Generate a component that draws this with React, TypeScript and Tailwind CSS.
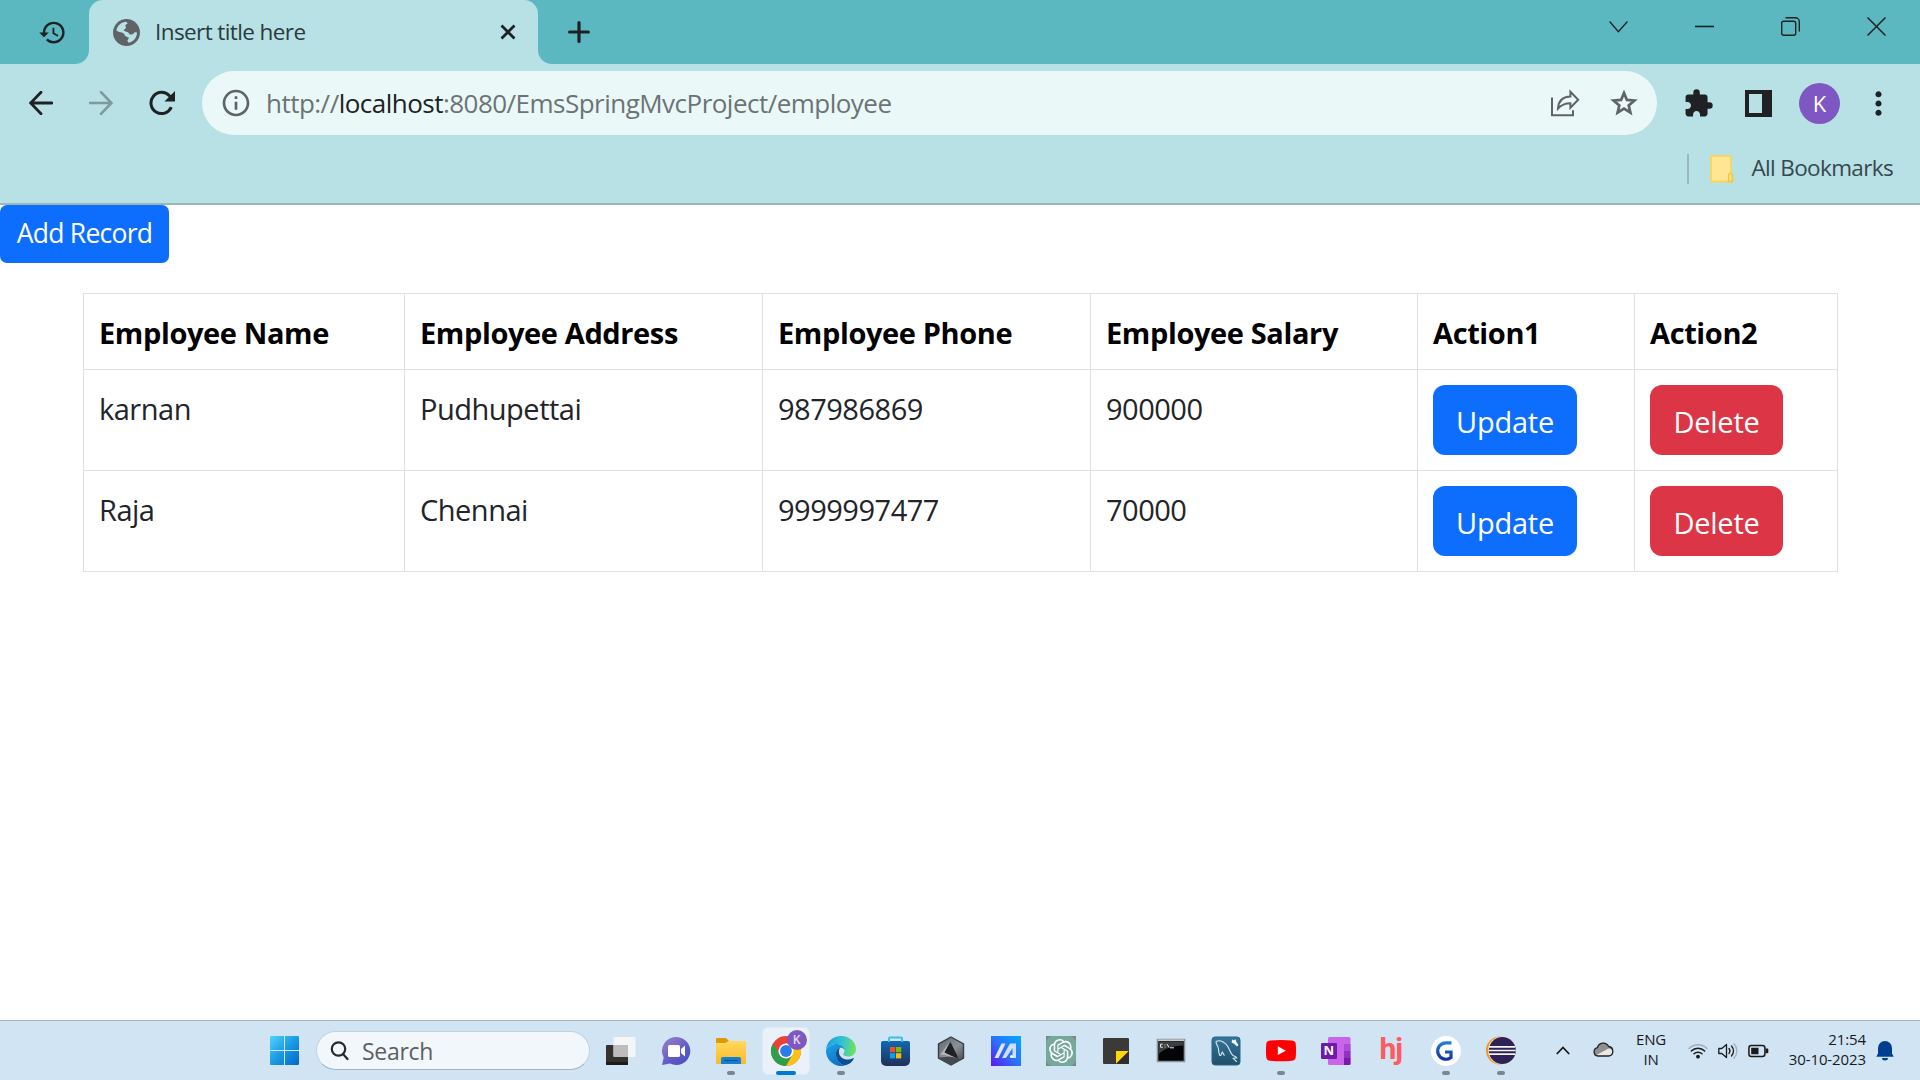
import type { ReactNode } from "react";
import { MdExtension, MdHistory, MdInfoOutline, MdMoreVert } from "react-icons/md";
import { SiOpenai } from "react-icons/si";

const columns = ["Employee Name", "Employee Address", "Employee Phone", "Employee Salary", "Action1", "Action2"];
const employees = [
  { name: "karnan", address: "Pudhupettai", phone: "987986869", salary: "900000" },
  { name: "Raja", address: "Chennai", phone: "9999997477", salary: "70000" },
];

function TabStrip() {
  return (
    <div className="flex h-16 bg-[#5bb8c1] text-[#202124]">
      <div className="w-[89px] shrink-0 bg-[#b7e1e4]">
        <div className="flex h-16 items-center rounded-br-[14px] bg-[#5bb8c1] pl-[38px]">
          <MdHistory size={29} />
        </div>
      </div>
      <div className="flex w-[449px] shrink-0 bg-[#5bb8c1]">
        <div className="flex flex-1 items-center rounded-t-[14px] bg-[#b7e1e4] pr-[21px] pl-[24px]">
          <svg width="27" height="27" viewBox="0 0 27 27">
            <circle cx="13.5" cy="13.5" r="13.5" fill="#5f6368" />
            <path d="M3.400 11.500C4.300 6.500 8.500 3 13 2.800L14.800 4.200 12.300 6.300 13 9 10.500 11.300 12.500 12.600 15 13.200 16.800 15.500 20 15.200 21.500 13.200 24 13.500C24 18.500 20.500 22.800 15.500 23.800L14.300 21.800 16 18.800 12.500 17.300 10.300 14 5.500 12.800z" fill="#b7e1e4" />
            <path d="M3.300 13.200l6 .8 2.300 3.800 2.800 1.800-1.500 4.500C7 24 3 19 3.300 13.200z" fill="#5f6368" />
          </svg>
          <span className="ml-[15px] text-[22.5px] tracking-[-0.6px] whitespace-nowrap text-[#2b3a3d]">Insert title here</span>
          <svg className="ml-auto" width="18" height="18" viewBox="0 0 18 18" stroke="currentColor" strokeWidth="2.8">
            <path d="M2.500 2.500l13 13M15.500 2.500l-13 13" />
          </svg>
        </div>
      </div>
      <div className="flex flex-1 bg-[#b7e1e4]">
        <div className="flex flex-1 items-center rounded-bl-[14px] bg-[#5bb8c1] pl-[30px]">
          <svg width="22" height="22" viewBox="0 0 22 22" stroke="currentColor" strokeWidth="3.2" strokeLinecap="round">
            <path d="M11 1.600v18.800M1.600 11h18.800" />
          </svg>
          <div className="mb-[11px] ml-auto flex items-center gap-[67px] pr-[34px]">
            <svg width="19" height="19" viewBox="0 0 19 19" fill="none" stroke="currentColor" strokeWidth="1.3">
              <path d="M.6 4.500l8.800 10.200 9-10.200" />
            </svg>
            <svg width="19" height="19" viewBox="0 0 19 19" stroke="currentColor" strokeWidth="1.600">
              <path d="M0 9.500h19" />
            </svg>
            <svg width="19" height="19" viewBox="0 0 19 19" fill="none" stroke="currentColor" strokeWidth="1.400">
              <rect x=".7" y="4.300" width="14" height="14" rx="2" />
              <path d="M4.500.8h9.800a4 4 0 0 1 4 4v9.800" />
            </svg>
            <svg width="19" height="19" viewBox="0 0 19 19" stroke="currentColor" strokeWidth="1.500">
              <path d="M.5.5l18 18M18.500.5l-18 18" />
            </svg>
          </div>
        </div>
      </div>
    </div>
  );
}

function Toolbar() {
  return (
    <div className="flex h-[78px] items-center pl-[29px] text-[#202124]">
      <svg width="24" height="24" viewBox="0 0 24 24" fill="none" stroke="currentColor" strokeWidth="2.8" strokeLinecap="round">
        <path d="M12 1.200L1.600 12 12 22.800M1.600 12H23" />
      </svg>
      <svg className="ml-9 text-[#7f999c]" width="24" height="24" viewBox="0 0 24 24" fill="none" stroke="currentColor" strokeWidth="2.600" strokeLinecap="round">
        <path d="M12 1.200L22.400 12 12 22.800M22.400 12H1" />
      </svg>
      <svg className="ml-9" width="27" height="26" viewBox="0 0 27 26" fill="none" stroke="currentColor" strokeWidth="3">
        <path d="M22.300 17.200A10.600 10.600 0 1 1 20.400 5.800l2 2" />
        <path d="M26 1v10.400H15.400z" fill="currentColor" stroke="none" />
      </svg>
      <div className="ml-[26px] flex h-16 w-[1455px] items-center rounded-full bg-[#ebf8f8] pl-[18px] text-[#5f6368]">
        <MdInfoOutline size={32} />
        <span className="ml-[14px] text-[26px] leading-none tracking-[-0.52px] whitespace-nowrap text-[#6b7376]">
          http://<span className="text-[#202124]">localhost</span>:8080/EmsSpringMvcProject/employee
        </span>
        <div className="ml-auto flex items-center gap-[28px] pr-[17px]">
          <svg width="30" height="28" viewBox="0 0 30 28" fill="none" stroke="currentColor" strokeWidth="2">
            <path d="M2 8.500v17.800h21v-5M8 19.500c.4-8 5-11.800 12.400-12V2.800l7.800 8-7.800 8v-4.600c-5.400 0-9 1.400-12.400 5.300z" />
          </svg>
          <svg width="32" height="32" viewBox="0 0 32 32" fill="none" stroke="currentColor" strokeWidth="2.7">
            <path d="M16 6l2.900 6.900 7.500.6-5.700 4.900 1.700 7.200-6.400-3.900-6.400 3.900 1.700-7.200-5.700-4.900 7.500-.6z" />
          </svg>
        </div>
      </div>
      <MdExtension className="ml-[26px]" size={31} />
      <svg className="ml-[31px]" width="27" height="27" viewBox="0 0 27 27">
        <path fill="currentColor" fillRule="evenodd" d="M0 0h27v27H0zM4 4v19h13V4z" />
      </svg>
      <div className="ml-[27px] flex size-[41px] items-center justify-center rounded-full bg-[#7e57c2] text-[22px] text-white">K</div>
      <MdMoreVert className="ml-[20px]" size={37} />
    </div>
  );
}

function BookmarksBar() {
  return (
    <div className="flex h-[63px] items-start justify-end border-b-[2px] border-[#97b8bb] pt-[11px] pr-[27px]">
      <div className="mt-px h-[30px] w-[1.5px] bg-[#9ab8bb]" />
      <svg className="mt-[2px] ml-[21px]" width="24" height="28" viewBox="0 0 24 28">
        <path d="M1 1h20v18.500l1.500 1.500v5.600H1z" fill="#ffe594" stroke="#fbd54f" strokeWidth="1.600" />
        <path d="M18.600 26.500v-6.200a1.900 1.900 0 0 1 3.800 0v6.200z" fill="#ffe07a" stroke="#f3c53c" strokeWidth="1.400" />
      </svg>
      <span className="ml-[18px] text-[22.5px] leading-[30px] tracking-[-0.65px] whitespace-nowrap text-[#37474f]">All Bookmarks</span>
    </div>
  );
}

function EmployeeTable() {
  const cell = "border border-[#dee2e6] px-[15px] align-top";
  const button = "flex h-[70px] items-center justify-center rounded-[12px] pt-[3px] tracking-[-0.25px] text-white";
  return (
    <table className="mt-[30px] ml-[83px] w-[1754px] table-fixed border-collapse text-left text-[29px] leading-[45px] text-[#212529]">
      <colgroup>
        <col className="w-[321px]" />
        <col className="w-[358px]" />
        <col className="w-[328px]" />
        <col className="w-[327px]" />
        <col className="w-[217px]" />
        <col className="w-[203px]" />
      </colgroup>
      <thead>
        <tr className="h-[76px] tracking-[-0.38px] text-black">
          {columns.map((c) => (
            <th key={c} className={`${cell} pt-[16px] font-bold`}>{c}</th>
          ))}
        </tr>
      </thead>
      <tbody>
        {employees.map((e) => (
          <tr key={e.name} className="h-[101px] tracking-[-0.49px]">
            <td className={`${cell} pt-[16px]`}>{e.name}</td>
            <td className={`${cell} pt-[16px]`}>{e.address}</td>
            <td className={`${cell} pt-[16px]`}>{e.phone}</td>
            <td className={`${cell} pt-[16px]`}>{e.salary}</td>
            <td className={`${cell} pt-[15px]`}>
              <button className={`${button} w-[144px] bg-[#0d6efd]`}>Update</button>
            </td>
            <td className={`${cell} pt-[15px]`}>
              <button className={`${button} w-[133px] bg-[#dc3545]`}>Delete</button>
            </td>
          </tr>
        ))}
      </tbody>
    </table>
  );
}

function Icon({ children }: { children: ReactNode }) {
  return (
    <svg width="32" height="32" viewBox="0 0 32 32" fill="none">
      {children}
    </svg>
  );
}

const apps: { id: string; mark?: "idle" | "active"; icon: ReactNode }[] = [
  {
    id: "taskview",
    icon: (
      <Icon>
        <rect x="1" y="10" width="22" height="20" rx="1" fill="#33322f" />
        <path d="M1 27h22v2a1 1 0 0 1-1 1H2a1 1 0 0 1-1-1z" fill="#1b1b1a" />
        <rect x="8.500" y="2" width="22" height="20" rx="1" fill="#f6f6f6" fillOpacity=".92" />
        <path d="M8.500 10H23v12H9.500a1 1 0 0 1-1-1z" fill="#bdbdbd" />
      </Icon>
    ),
  },
  {
    id: "chat",
    icon: (
      <Icon>
        <defs>
          <linearGradient id="chat" x1="4" y1="3" x2="26" y2="29" gradientUnits="userSpaceOnUse">
            <stop stopColor="#6b8ddb" />
            <stop offset=".25" stopColor="#8a6fc4" />
            <stop offset=".6" stopColor="#5f5bc9" />
            <stop offset="1" stopColor="#4f50bd" />
          </linearGradient>
        </defs>
        <path d="M16.500 2A14 14 0 1 1 10 28.500L2 30l1.700-7.400A14 14 0 0 1 16.500 2z" fill="url(#chat)" />
        <rect x="8" y="10" width="12" height="12" rx="1.500" fill="#fff" />
        <path d="M21 14l4-3.500v11L21 18z" fill="#fff" />
      </Icon>
    ),
  },
  {
    id: "explorer",
    mark: "idle",
    icon: (
      <Icon>
        <defs>
          <linearGradient id="folder" x1="0" y1="6" x2="0" y2="29" gradientUnits="userSpaceOnUse">
            <stop stopColor="#ffd95c" />
            <stop offset="1" stopColor="#fbb92b" />
          </linearGradient>
        </defs>
        <path d="M1 4a1 1 0 0 1 1-1h9l3 3v5H1z" fill="#dc9a07" />
        <path d="M1 8h9.500l3-2H30a1 1 0 0 1 1 1v21a1 1 0 0 1-1 1H2a1 1 0 0 1-1-1z" fill="url(#folder)" />
        <path d="M6 24a2 2 0 0 1 2-2h16a2 2 0 0 1 2 2v5H6z" fill="#1381d2" />
        <path d="M9.500 25.500h13" stroke="#0b4f97" strokeWidth="1.200" />
      </Icon>
    ),
  },
  {
    id: "chrome",
    mark: "active",
    icon: (
      <Icon>
        <circle cx="16" cy="16" r="15" fill="#ea4335" />
        <path d="M3 8.500a15 15 0 0 0 13 22.500l6.500-11.200H9.500z" fill="#2f9e4b" />
        <path d="M29 8.500H16v7.500l6.500 3.700L16 31A15 15 0 0 0 29 8.500z" fill="#fbc116" />
        <circle cx="16" cy="16" r="7.600" fill="#fff" />
        <circle cx="16" cy="16" r="5.900" fill="#2b7bea" />
      </Icon>
    ),
  },
  {
    id: "edge",
    mark: "idle",
    icon: (
      <Icon>
        <defs>
          <linearGradient id="edgeTop" x1="2" y1="10" x2="30" y2="14" gradientUnits="userSpaceOnUse">
            <stop stopColor="#1f9fe0" />
            <stop offset=".55" stopColor="#34c4d0" />
            <stop offset="1" stopColor="#6fe35a" />
          </linearGradient>
          <linearGradient id="edgeSide" x1="4" y1="10" x2="16" y2="31" gradientUnits="userSpaceOnUse">
            <stop stopColor="#1b9de2" />
            <stop offset="1" stopColor="#0a6fc4" />
          </linearGradient>
        </defs>
        <path d="M1 15C1.500 6.500 8 1 16 1c9 0 15 6.500 15 13 0 5-3.700 7.500-7.500 7.500-3.500 0-5.300-1.300-5.300-2.300 0-.8 1.300-1.400 1.300-3.700 0-3.800-3.800-6.500-8-6.500-5 0-8.800 2.500-10.500 6z" fill="url(#edgeTop)" />
        <path d="M1 15c2-3.800 6-6 10.500-6 4 0 7.500 2.300 8 5.800-1.500-1.700-3-2.300-4.500-2-3.500 1-4.700 5-4 8.200.8 4.500 4 8.500 9 9.400A15 15 0 0 1 1 15z" fill="url(#edgeSide)" />
        <path d="M15 12.800c-3.500 1-4.700 5-4 8.200.8 4.700 4.500 9 9.500 9.300 3.800-1 6.700-3.300 8.300-6.300.3-.6-.2-1-.8-.7-6.500 3-13 .3-14-5.300-.3-2 .2-4 1-5.200z" fill="#0d4f95" />
      </Icon>
    ),
  },
  {
    id: "store",
    icon: (
      <Icon>
        <defs>
          <linearGradient id="store" x1="0" y1="6" x2="0" y2="31" gradientUnits="userSpaceOnUse">
            <stop stopColor="#1267b3" />
            <stop offset="1" stopColor="#203157" />
          </linearGradient>
        </defs>
        <path d="M1 8a2 2 0 0 1 2-2h25a2 2 0 0 1 2 2v18a5 5 0 0 1-5 5H6a5 5 0 0 1-5-5z" fill="url(#store)" />
        <path d="M9 7V3.500a1 1 0 0 1 1-1h11a1 1 0 0 1 1 1V7" stroke="#35c1f1" strokeWidth="2" />
        <path d="M10 12h5.200v5.200H10z" fill="#f25022" />
        <path d="M16 12h5.200v5.200H16z" fill="#7fba00" />
        <path d="M10 18.200h5.200v5.200H10z" fill="#00a4ef" />
        <path d="M16 18.200h5.200v5.200H16z" fill="#ffb900" />
      </Icon>
    ),
  },
  {
    id: "armoury",
    icon: (
      <Icon>
        <defs>
          <linearGradient id="crate" x1="4" y1="2" x2="28" y2="30" gradientUnits="userSpaceOnUse">
            <stop stopColor="#5d636b" />
            <stop offset=".5" stopColor="#8d9298" />
            <stop offset="1" stopColor="#3a3d42" />
          </linearGradient>
        </defs>
        <path d="M16 2l12.500 7v14L16 30 3.500 23V9z" fill="url(#crate)" stroke="#3b3e43" strokeWidth="1.400" />
        <path d="M3.500 22.500L16 30l9-5-3-4z" fill="#45484d" />
        <path d="M15.500 7L23 22.500 7.500 20z" fill="#1f2124" />
        <path d="M5.500 19.500L14.500 7 9.500 17.500l11 5.300z" fill="#b4b8bd" />
        <path d="M15.500 8L22.500 22 11 17.500z" fill="#1f2124" />
      </Icon>
    ),
  },
  {
    id: "myasus",
    icon: (
      <Icon>
        <defs>
          <linearGradient id="myasus" x1="2" y1="30" x2="30" y2="3" gradientUnits="userSpaceOnUse">
            <stop stopColor="#5a1cf0" />
            <stop offset=".5" stopColor="#2a72fa" />
            <stop offset="1" stopColor="#08a4ff" />
          </linearGradient>
        </defs>
        <path d="M1 1h30v30H1z" fill="url(#myasus)" />
        <path d="M4.500 23L11.500 8.500h4L8.500 23z" fill="#dfe6ff" />
        <path d="M12 23L20 8.500h6V23h-3.500V13L16 23z" fill="#d3deff" />
        <circle cx="21.500" cy="21.500" r="1.600" fill="#fff" />
      </Icon>
    ),
  },
  {
    id: "chatgpt",
    icon: (
      <div className="flex size-[30px] items-center justify-center bg-[#7b8784]">
        <div className="flex size-[30px] items-center justify-center rounded-[7px] bg-[#75a99b] text-white">
          <SiOpenai size={24} />
        </div>
      </div>
    ),
  },
  {
    id: "notes",
    icon: (
      <Icon>
        <rect x="3" y="3" width="26" height="26" rx="1" fill="#3b3a39" />
        <path d="M16 16h13L16 29z" fill="#ffd60a" />
        <path d="M29 16v12a1 1 0 0 1-1 1H16z" fill="#2f2e2c" />
      </Icon>
    ),
  },
  {
    id: "terminal",
    icon: (
      <Icon>
        <path d="M2.500 4.500h27v22h-27z" fill="#050505" stroke="#8e9296" strokeWidth="1.600" />
        <path d="M3.500 6.500h25v4c-12 .5-20 3-25 9z" fill="#3c3e40" />
        <path d="M3 5.300h26" stroke="#c9ccce" strokeWidth="1.500" />
        <path d="M7.800 9.200H5.500v3h2.300M10 9.500v.8M10 11.700v.8M12 9l2 3.500M15 12.800h4" stroke="#e6e6e6" strokeWidth="1" />
      </Icon>
    ),
  },
  {
    id: "mysql",
    icon: (
      <Icon>
        <defs>
          <linearGradient id="mysql" x1="0" y1="2" x2="0" y2="30" gradientUnits="userSpaceOnUse">
            <stop stopColor="#35769c" />
            <stop offset="1" stopColor="#1f4f69" />
          </linearGradient>
        </defs>
        <rect x="2" y="2" width="28" height="28" rx="3" fill="url(#mysql)" stroke="#2b6586" />
        <path d="M6 6.500c4-2 9 .5 11.500 4.500 2.500 4 3 8 5.500 9.500 1.500.8 3 1.300 3.800 2.300l-3.500.5 3.500 3.500M6 6.500c0 3 2 4.500 2.500 7.500.3 2 .3 5.500 1.500 6.500 1.200.5 1.500-2.500 2.300-3.500.8 1.500 1.200 2.500 2.200 3.500" stroke="#dcebf3" strokeWidth="1.100" />
        <path d="M22 4.500l2 .8 1.500-1 .7 2.200 2.300 3.500-1.500 1.500-3.300-3-2-.7z" fill="#eef5f9" />
      </Icon>
    ),
  },
  {
    id: "youtube",
    mark: "idle",
    icon: (
      <Icon>
        <path d="M5 5.600q11-1.200 22 0c3 .3 3.600 1.700 3.800 4 .3 4 .3 8 0 12-.3 2.600-1 3.800-3.800 4.100q-11 1.100-22 0c-3-.3-3.600-1.600-3.800-4.100-.3-4-.3-8 0-12 .2-2.600 1-3.700 3.800-4z" fill="#f00" />
        <path d="M12.800 11.300l8 4.400-8 4.400z" fill="#fff" />
      </Icon>
    ),
  },
  {
    id: "onenote",
    icon: (
      <div className="relative">
        <Icon>
          <rect x="8" y="2" width="22.500" height="28" rx="1.500" fill="#ca64ea" />
          <path d="M24 9h6.500v7H24z" fill="#ae4bd5" />
          <path d="M24 16h6.500v7H24z" fill="#9332bf" />
          <path d="M24 23h6.500v5.500a1.500 1.500 0 0 1-1.500 1.500h-5z" fill="#7719aa" />
          <rect x="1" y="8" width="16" height="16" rx="1.300" fill="#6f1aa8" />
        </Icon>
        <span className="absolute top-2 left-px flex size-4 items-center justify-center text-[13px] leading-none font-bold text-white">N</span>
      </div>
    ),
  },
  {
    id: "hj",
    icon: <span className="mb-[4px] font-['Roboto'] text-[30px] leading-none font-bold tracking-[-1px] text-[#ff5a5f]">hj</span>,
  },
  {
    id: "g",
    mark: "idle",
    icon: (
      <Icon>
        <defs>
          <linearGradient id="gmark" x1="16" y1="6" x2="16" y2="26" gradientUnits="userSpaceOnUse">
            <stop stopColor="#1f86d6" />
            <stop offset="1" stopColor="#132a9c" />
          </linearGradient>
        </defs>
        <circle cx="16" cy="16" r="15" fill="#fff" />
        <path d="M21.500 7.800h-5.300a8.200 8.200 0 1 0 4.800 14.600V17H15" stroke="url(#gmark)" strokeWidth="3.200" />
      </Icon>
    ),
  },
  {
    id: "eclipse",
    mark: "idle",
    icon: (
      <Icon>
        <circle cx="15" cy="15.500" r="14" fill="#f7941e" />
        <circle cx="17" cy="15.500" r="14" fill="#f3e3d3" />
        <circle cx="17.300" cy="15.500" r="13.500" fill="#2c2255" />
        <path d="M4 11.800h26M3.700 15.500h27M4 19.200h26" stroke="#f4f4fa" strokeWidth="1.700" />
      </Icon>
    ),
  },
];

function Tray() {
  return (
    <div className="ml-auto flex h-full items-center text-[15px] text-[#1a1a1a]">
      <svg width="14" height="14" viewBox="0 0 14 14" fill="none" stroke="currentColor" strokeWidth="1.800">
        <path d="M.8 10L7 3.500 13.200 10" />
      </svg>
      <svg className="mb-[3px] ml-[23px]" width="21" height="16" viewBox="0 0 21 16">
        <path d="M5 15a4.200 4.200 0 0 1-.6-8.300A6 6 0 0 1 15.600 5.500 4.800 4.800 0 0 1 15.800 15z" fill="#8f8f8f" />
        <path d="M3 14.300L15.500 7.500a4 4 0 0 1 4 3.500c0 2.500-1.500 4-3.700 4H5z" fill="#e9e9e9" />
        <path d="M5 15a4.200 4.200 0 0 1-.6-8.300A6 6 0 0 1 15.600 5.500 4.800 4.800 0 0 1 15.800 15z" fill="none" stroke="#222" strokeWidth="1.300" />
      </svg>
      <div className="mb-[3px] ml-[21px] w-[32px] text-center leading-[20px] tracking-[-0.2px]">
        ENG
        <br />
        IN
      </div>
      <svg className="ml-[21px]" width="20" height="16" viewBox="0 0 20 16" fill="none" strokeWidth="1.500" strokeLinecap="round">
        <path d="M1 5.500a12.500 12.500 0 0 1 18 0" stroke="#9db0be" />
        <path d="M3.300 8a9.500 9.500 0 0 1 13.400 0M6 10.800a5.700 5.700 0 0 1 8 0" stroke="#1a1a1a" />
        <circle cx="10" cy="13.700" r="1.900" fill="#1a1a1a" />
      </svg>
      <svg className="ml-[10px]" width="20" height="16" viewBox="0 0 20 16" fill="none" stroke="#1a1a1a" strokeWidth="1.300" strokeLinecap="round">
        <path d="M.8 5.500h3L8.500 1.500v13L3.800 10.500h-3z" strokeLinejoin="round" />
        <path d="M11 5.500a4 4 0 0 1 0 5M13.500 3a7.300 7.300 0 0 1 0 10" />
        <path d="M16 .8a10.500 10.500 0 0 1 0 14.400" stroke="#9db0be" />
      </svg>
      <svg className="ml-[10px]" width="21" height="14" viewBox="0 0 21 14">
        <rect x=".9" y="1.400" width="16" height="11" rx="2.500" fill="none" stroke="#1a1a1a" strokeWidth="1.500" />
        <path d="M3.200 3.700h7.300v6.500H3.200zM17.500 4.500h2a.8.8 0 0 1 .8.800v3.200a.8.800 0 0 1-.8.800h-2z" fill="#1a1a1a" />
      </svg>
      <div className="mb-[4px] ml-[18px] w-[79px] text-right leading-[20px] tracking-[-0.1px] whitespace-nowrap">
        21:54
        <br />
        30-10-2023
      </div>
      <svg className="ml-[10px]" width="18" height="20" viewBox="0 0 18 20" fill="#003e92">
        <path d="M9 0a7 7 0 0 1 7 7v5.500l1.700 3.200H.3L2 12.500V7a7 7 0 0 1 7-7zM6 17h6a3 2.500 0 0 1-6 0z" />
      </svg>
    </div>
  );
}

function Taskbar() {
  return (
    <div className="flex h-[60px] items-center border-t border-[#a4b4c2] bg-[#d1e4f4] pr-[26px] pl-[270px]">
      <svg width="29" height="29" viewBox="0 0 29 29">
        <defs>
          <linearGradient id="win" x1="0" y1="0" x2="1" y2="1">
            <stop stopColor="#4fd3ff" />
            <stop offset=".5" stopColor="#1b9ae4" />
            <stop offset="1" stopColor="#0067c8" />
          </linearGradient>
        </defs>
        <path fill="url(#win)" d="M1 0h13v14H0V1a1 1 0 0 1 1-1zM15 0h13a1 1 0 0 1 1 1v13H15zM0 15h14v14H1a1 1 0 0 1-1-1zM15 15h14v13a1 1 0 0 1-1 1H15z" />
      </svg>
      <div className="ml-[17px] flex h-[39px] w-[274px] shrink-0 items-center rounded-full border border-[#bfd3e2] border-b-[#9fb4c5] bg-[#f2f7fc] pl-[13px]">
        <svg width="19" height="20" viewBox="0 0 19 20" fill="none" stroke="#2a2a2a" strokeWidth="2.200" strokeLinecap="round">
          <circle cx="8.500" cy="8" r="6.700" />
          <path d="M13 13l4.500 5" />
        </svg>
        <span className="mt-px ml-[13px] text-[23px] leading-none tracking-[-0.3px] text-[#5d5f61]">Search</span>
      </div>
      <div className="ml-[3px] flex h-full shrink-0 items-center">
        {apps.map((a) => (
          <div key={a.id} className="flex w-[55.020px] justify-center">
            <div
              className={
                a.mark === "active"
                  ? "relative flex size-12 items-center justify-center rounded-md border border-[#dfeaf3] bg-[#e9f2fa]"
                  : "relative flex size-12 items-center justify-center"
              }
            >
              {a.icon}
              {a.mark === "active" && (
                <>
                  <span className="absolute top-[2px] right-[2px] flex size-5 items-center justify-center rounded-full bg-[#7e57c2] text-[12px] font-semibold text-[#e4daf3]">K</span>
                  <span className="absolute -bottom-px left-[13px] h-1 w-5 rounded-full bg-[#0078d4]" />
                </>
              )}
              {a.mark === "idle" && <span className="absolute bottom-0 left-5 h-1 w-2 rounded-full bg-[#7d868d]" />}
            </div>
          </div>
        ))}
      </div>
      <Tray />
    </div>
  );
}

export default function App() {
  return (
    <div className="flex h-[1080px] w-[1920px] flex-col overflow-hidden bg-white font-['Open_Sans','Noto_Sans',sans-serif]">
      <header className="bg-[#b7e1e4]">
        <TabStrip />
        <Toolbar />
        <BookmarksBar />
      </header>
      <main className="flex-1">
        <button className="flex h-[57.5px] w-[169px] items-center justify-center rounded-[7px] bg-[#0d6efd] pt-px text-[26.5px] tracking-[-0.75px] whitespace-nowrap text-white">
          Add Record
        </button>
        <EmployeeTable />
      </main>
      <Taskbar />
    </div>
  );
}
